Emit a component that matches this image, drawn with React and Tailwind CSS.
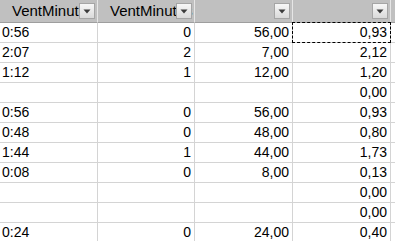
import React from 'react';

const rows = [
  ['0:56', '0', '56,00', '0,93'],
  ['2:07', '2', '7,00', '2,12'],
  ['1:12', '1', '12,00', '1,20'],
  ['', '', '', '0,00'],
  ['0:56', '0', '56,00', '0,93'],
  ['0:48', '0', '48,00', '0,80'],
  ['1:44', '1', '44,00', '1,73'],
  ['0:08', '0', '8,00', '0,13'],
  ['', '', '', '0,00'],
  ['', '', '', '0,00'],
  ['0:24', '0', '24,00', '0,40'],
];

function FilterButton() {
  return (
    <div className="absolute right-[2px] top-[3px] w-[16px] h-[16px] border border-[#a5a5a5] bg-gradient-to-b from-[#f7f7f7] to-[#dadada] flex items-center justify-center">
      <svg width="8" height="5" viewBox="0 0 8 5">
        <path d="M0.5 0.5 H7.5 L4 4.5 Z" fill="#3c3c3c" />
      </svg>
    </div>
  );
}

function HeaderCell({ label }) {
  return (
    <div className="relative h-[23px] bg-[#c0c0c0] border-r border-b border-r-[#e6e6e6] border-b-[#9e9e9e] overflow-hidden">
      <div className="absolute left-[12px] bottom-[2px] whitespace-nowrap text-[15px] leading-[18px]">{label}</div>
      <FilterButton />
    </div>
  );
}

export default function App() {
  return (
    <div
      className="w-[395px] h-[241px] overflow-hidden bg-white text-[14px] leading-[16px] text-black"
      style={{ fontFamily: '"Liberation Sans", Arial, sans-serif' }}
    >
      <div className="grid grid-cols-[98px_97px_98px_98px_40px]">
        <HeaderCell label="VentMinutos" />
        <HeaderCell label="VentMinutos" />
        <HeaderCell label="" />
        <HeaderCell label="" />
        <div className="h-[23px] bg-[#c0c0c0] border-b border-b-[#9e9e9e]" />

        {rows.map((r, i) => (
          <React.Fragment key={i}>
            <div className="h-[20px] border-r border-b border-[#d4d4d4] flex items-end pl-[2px] pb-[2px] whitespace-nowrap">{r[0]}</div>
            <div className="h-[20px] border-r border-b border-[#d4d4d4] flex items-end justify-end pr-[3px] pb-[2px]">{r[1]}</div>
            <div className="h-[20px] border-r border-b border-[#d4d4d4] flex items-end justify-end pr-[3px] pb-[2px]">{r[2]}</div>
            <div className="relative h-[20px] border-r border-b border-[#d4d4d4] flex items-end justify-end pr-[3px] pb-[2px]">
              {r[3]}
              {i === 0 && (
                <div className="absolute -left-[1px] -top-[1px] w-[99px] h-[21px] border border-dashed border-black" />
              )}
            </div>
            <div className="h-[20px] border-b border-[#d4d4d4]" />
          </React.Fragment>
        ))}
      </div>
    </div>
  );
}
